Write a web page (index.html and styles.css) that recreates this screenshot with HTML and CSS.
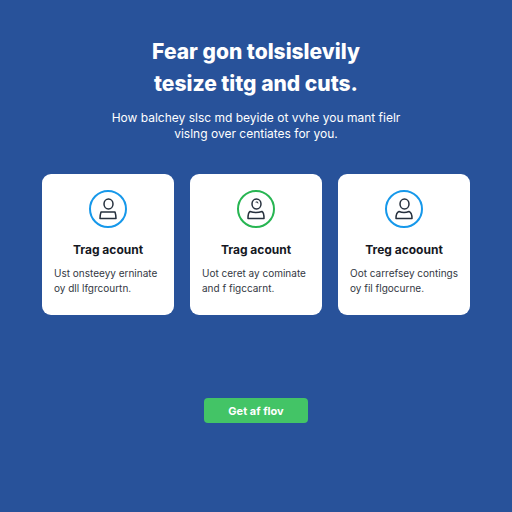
FILE: index.html
```html
<!DOCTYPE html>
<html lang="en">
<head>
<meta charset="utf-8">
<meta name="viewport" content="width=device-width, initial-scale=1">
<title>Trag acount</title>
<link rel="stylesheet" href="styles.css">
</head>
<body>
<main class="page">
  <header class="hero">
    <h1 class="title">Fear gon tolsislevily<br>tesize titg and cuts.</h1>
    <p class="lead">How balchey slsc md beyide ot vvhe you mant fielr<br>vislng over centiates for you.</p>
  </header>
  <section class="cards">
    <article class="card">
      <svg class="icon icon-blue" viewBox="0 0 40 40" aria-hidden="true">
        <circle class="ring" cx="20" cy="20" r="18"/>
        <ellipse cx="20.500" cy="15" rx="4.500" ry="5"/>
        <path d="M13 23h14q1 3 1 6.500H12q0-3.500 1-6.500z"/>
      </svg>
      <h2 class="name">Trag acount</h2>
      <p class="text">Ust onsteeyy erninate<br>oy dll lfgrcourtn.</p>
    </article>
    <article class="card">
      <svg class="icon icon-green" viewBox="0 0 40 40" aria-hidden="true">
        <circle class="ring" cx="20" cy="20" r="18"/>
        <ellipse cx="20.500" cy="15" rx="4.500" ry="5"/>
        <path d="M14 22.500q6 2 12 0 2 1 2 7H12q0-6 2-7z"/>
        <path class="shine" d="M20 13q2-1 2 1"/>
      </svg>
      <h2 class="name">Trag acount</h2>
      <p class="text">Uot ceret ay cominate<br>and f figccarnt.</p>
    </article>
    <article class="card">
      <svg class="icon icon-blue" viewBox="0 0 40 40" aria-hidden="true">
        <circle class="ring" cx="20" cy="20" r="18"/>
        <ellipse cx="20.500" cy="15" rx="4.500" ry="5"/>
        <path d="M15 22.500q5 2 10 0 3 1 3 7H12q0-6 3-7z"/>
      </svg>
      <h2 class="name">Treg acoount</h2>
      <p class="text">Oot carrefsey contings<br>oy fil flgocurne.</p>
    </article>
  </section>
  <button class="cta" type="button">Get af flov</button>
</main>
</body>
</html>
```
FILE: styles.css
```css
* {
  box-sizing: border-box;
}

body {
  margin: 0;
  min-height: 100vh;
  background: #28529a;
  color: #fff;
  font-family: Inter, "Liberation Sans", sans-serif;
}

.page {
  display: flex;
  flex-direction: column;
  align-items: center;
  padding: 36px 42px;
}

.hero {
  text-align: center;
  white-space: nowrap;
}

.title {
  margin: 0;
  font-size: 21px;
  line-height: 32px;
  font-weight: 800;
}

.lead {
  margin: 10px 0 0;
  font-size: 12px;
  line-height: 16px;
}

.cards {
  display: grid;
  grid-template-columns: repeat(3, 1fr);
  gap: 16px;
  width: 100%;
  max-width: 640px;
  margin-top: 32px;
}

.card {
  display: flex;
  flex-direction: column;
  align-items: center;
  padding: 15px 12px 19px;
  border-radius: 9px;
  background: #fff;
  color: #15181f;
}

.icon {
  width: 40px;
  height: 40px;
  fill: none;
  stroke: #26303d;
  stroke-width: 1.5;
  stroke-linejoin: round;
  stroke-linecap: round;
}

.ring {
  stroke-width: 2;
}

.icon-blue .ring {
  stroke: #1698ea;
}

.icon-green .ring {
  stroke: #27b552;
}

.shine {
  stroke-width: 1;
}

.name {
  margin: 13px 0 0;
  font-size: 12px;
  line-height: 16px;
  font-weight: 700;
}

.text {
  align-self: stretch;
  margin: 8px 0 0;
  color: #333843;
  font-size: 10px;
  line-height: 15px;
  white-space: nowrap;
}

.cta {
  width: 104px;
  height: 25px;
  margin-top: 83px;
  padding: 0;
  border: 0;
  border-radius: 4px;
  background: #43c466;
  color: #fff;
  font: 700 11px/16px Inter, "Liberation Sans", sans-serif;
  cursor: pointer;
}
```
